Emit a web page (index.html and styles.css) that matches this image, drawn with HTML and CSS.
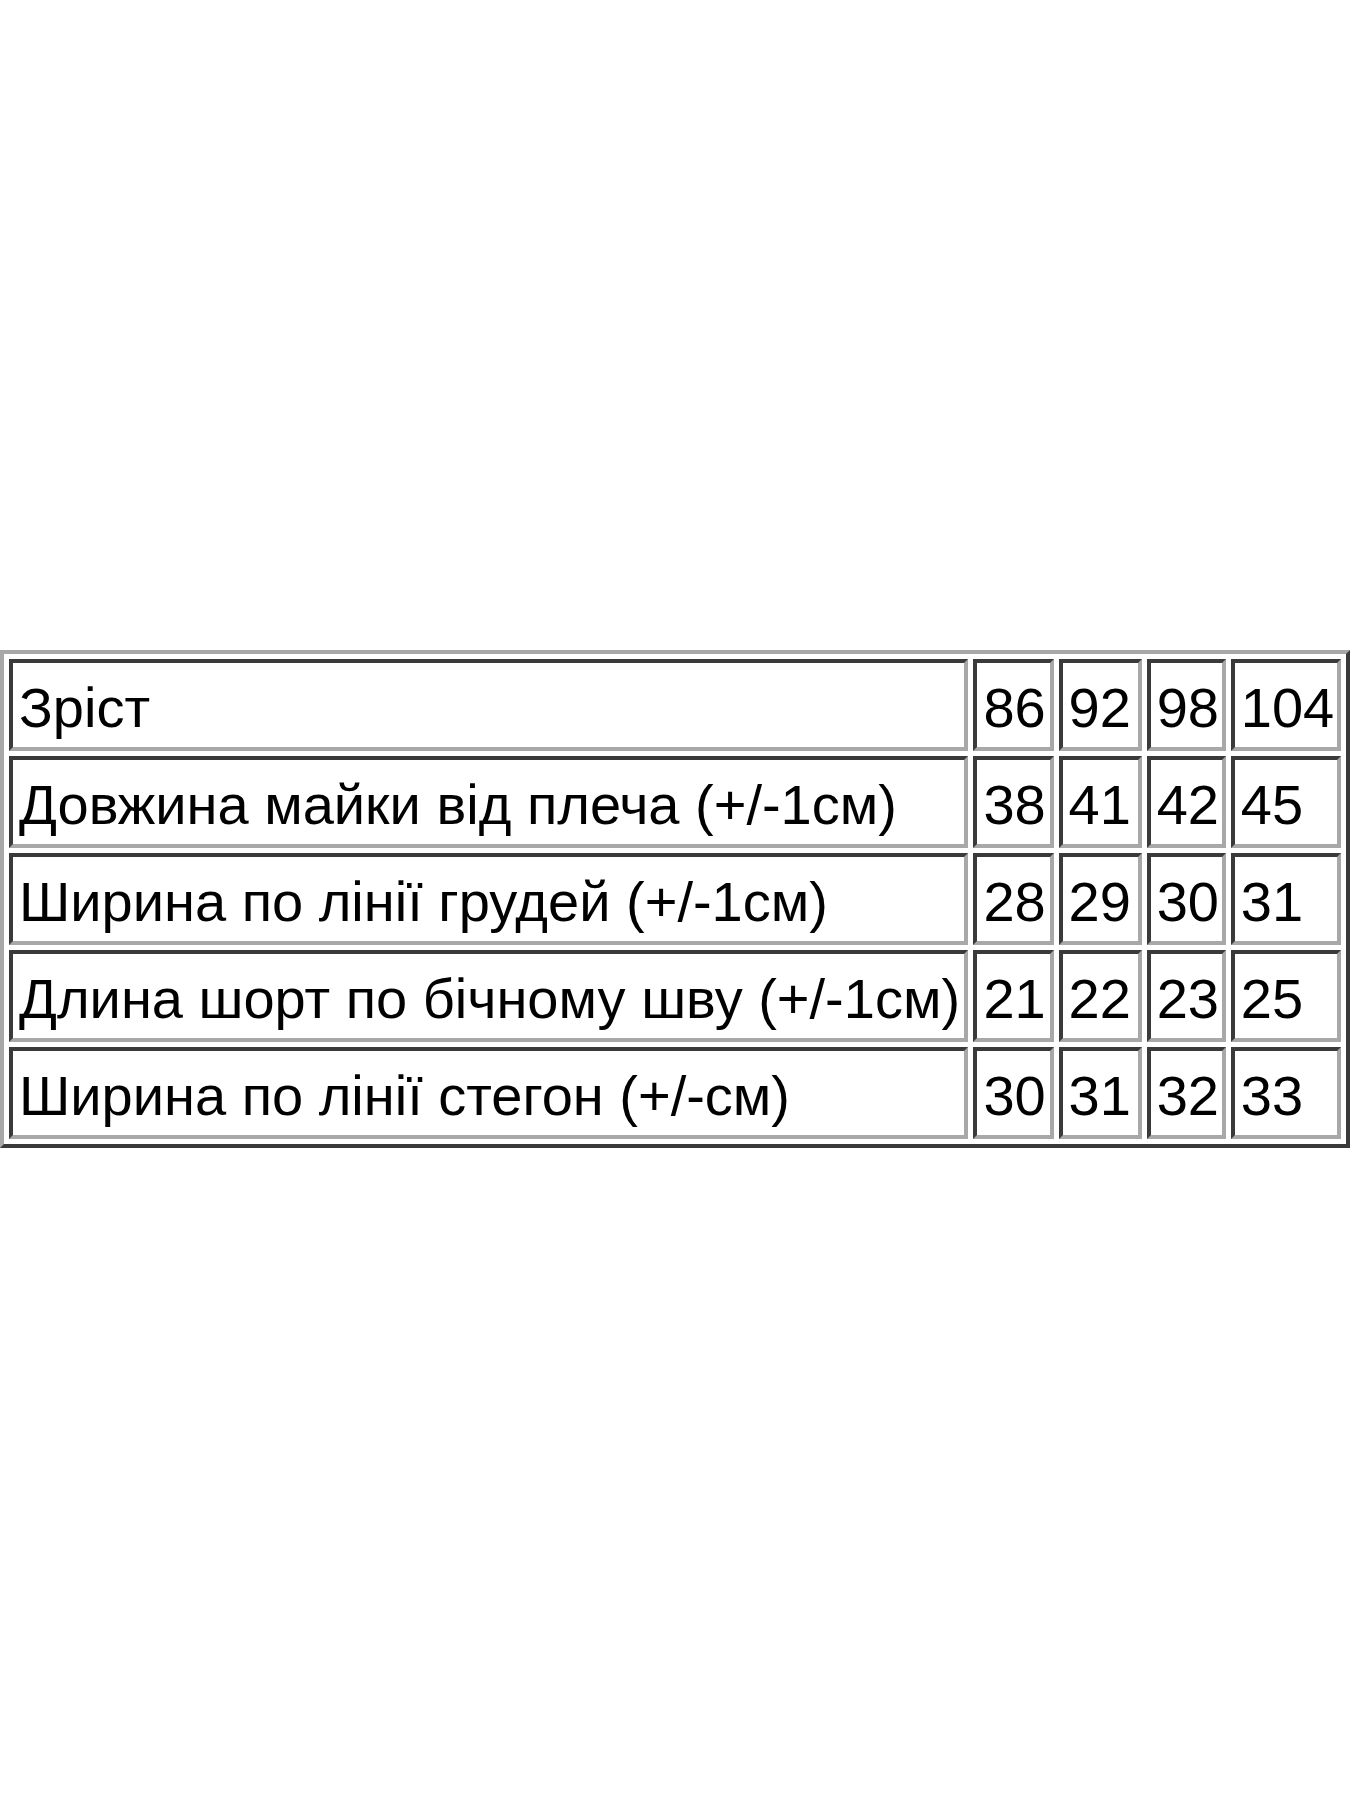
FILE: index.html
```html
<!DOCTYPE html>
<html lang="uk">
<head>
<meta charset="utf-8">
<title>Розмірна сітка</title>
<link rel="stylesheet" href="styles.css">
</head>
<body>
<div class="page">
  <table class="sizes">
    <colgroup>
      <col class="c-label">
      <col class="c-86">
      <col class="c-92">
      <col class="c-98">
      <col class="c-104">
    </colgroup>
    <tr><td>Зріст</td><td>86</td><td>92</td><td>98</td><td>104</td></tr>
    <tr><td>Довжина майки від плеча (+/-1см)</td><td>38</td><td>41</td><td>42</td><td>45</td></tr>
    <tr><td>Ширина по лінії грудей (+/-1см)</td><td>28</td><td>29</td><td>30</td><td>31</td></tr>
    <tr><td>Длина шорт по бічному шву (+/-1см)</td><td>21</td><td>22</td><td>23</td><td>25</td></tr>
    <tr><td>Ширина по лінії стегон (+/-см)</td><td>30</td><td>31</td><td>32</td><td>33</td></tr>
  </table>
</div>
</body>
</html>
```
FILE: styles.css
```css
html, body {
  margin: 0;
  padding: 0;
  background: #ffffff;
}
.page {
  width: 1350px;
  height: 1800px;
  padding-top: 650px;
  box-sizing: border-box;
}
.sizes {
  border-collapse: separate;
  border-spacing: 5px;
  border-style: solid;
  border-width: 4px;
  border-color: #a8a8a8 #3a3a3a #3a3a3a #a8a8a8;
  table-layout: fixed;
  width: 1350px;
  font-family: "Liberation Sans", Arial, sans-serif;
  font-size: 56px;
  color: #000;
}
.c-label { width: 958px; }
.c-86 { width: 80px; }
.c-92 { width: 83px; }
.c-98 { width: 79px; }
.c-104 { width: 110px; }
.sizes td {
  border-style: solid;
  border-width: 4px;
  border-color: #3a3a3a #a8a8a8 #a8a8a8 #3a3a3a;
  padding: 5px 0 0 6px;
  box-sizing: border-box;
  height: 92px;
  vertical-align: middle;
  white-space: nowrap;
  overflow: hidden;
  line-height: 1;
}
```
